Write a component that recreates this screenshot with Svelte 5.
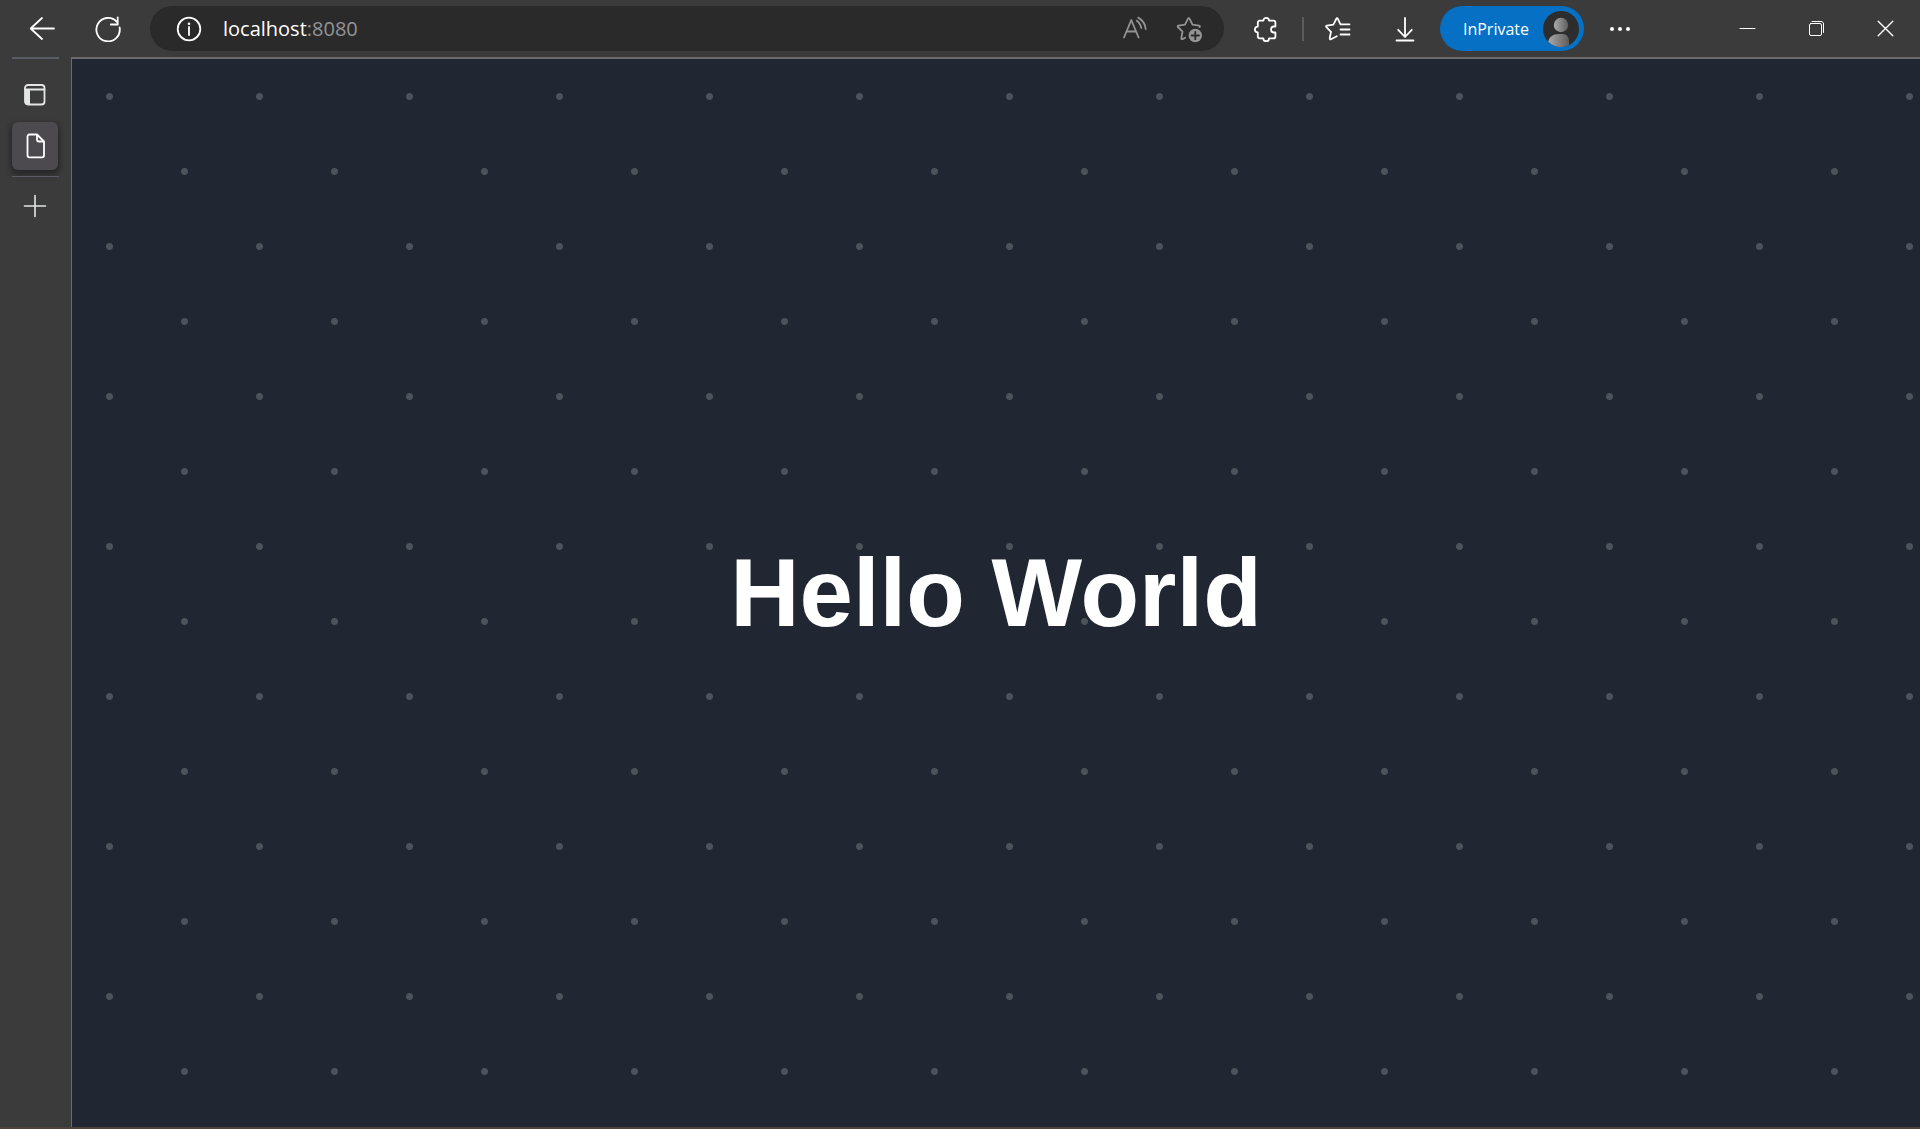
<script>
  const address = { host: 'localhost', port: ':8080' };
</script>

<div class="browser">
  <header class="toolbar">
    <button class="tool nav" aria-label="Back">
      <svg width="26" height="26" viewBox="0 0 26 26"><path d="M25 12.5H2M13 2 1.7 12.5 13 23" /></svg>
    </button>
    <button class="tool nav" aria-label="Refresh">
      <svg width="26" height="26" viewBox="0 0 26 26"><path d="M24.6 11.5A11.7 11.7 0 1 1 21.8 5.8M22.7 1.5V8.5H15.8" /></svg>
    </button>

    <form class="address" onsubmit={(e) => e.preventDefault()}>
      <button type="button" class="site" aria-label="View site information">
        <svg width="26" height="26" viewBox="0 0 26 26"><circle cx="13" cy="13" r="11.3" /><path d="M13 11v8" /><circle class="solid" cx="13" cy="7.7" r="1.3" /></svg>
      </button>
      <a class="url" href="#top">{address.host}<span>{address.port}</span></a>
      <button type="button" class="dim" aria-label="Read aloud">
        <svg width="26" height="26" viewBox="0 0 26 26"><path d="M2 21.5 9.3 4 16.6 21.5M4.8 15.5H14M14.8 4.8C17.2 6.5 18.8 9 19.2 12M16.2 1.6C20.5 4 23.2 8 23.7 13" /></svg>
      </button>
      <button type="button" class="dim" aria-label="Add this page to favorites">
        <svg width="28" height="28" viewBox="0 0 28 28"><path d="M9.2 22.8 6.5 24.1C5.8 24.4 5.2 24 5.3 23.3L6.5 16.6 1.9 12C1.4 11.5 1.7 10.7 2.4 10.6L9 9.6 12 3.6C12.4 3 13.2 3 13.5 3.6L16.5 9.6 23.1 10.6C24 10.8 24.2 11.6 23.6 12.1" /><circle class="solid" cx="19.3" cy="20.5" r="6.7" /><path class="cut" d="M19.3 16.8v7.4M15.6 20.5H23" /></svg>
      </button>
    </form>

    <button class="tool extension" aria-label="Extensions">
      <svg width="26" height="26" viewBox="0 0 26 26"><path d="M10.4 4.6A2.8 2.8 0 0 1 16 4.6H20.4C21.6 4.6 22.4 5.4 22.4 6.6V10.5H21A3 3 0 0 0 21 16.5H22.4V20.4C22.4 21.6 21.6 22.4 20.4 22.4H16A2.8 2.8 0 0 1 10.4 22.4H6.8C5.6 22.4 4.8 21.6 4.8 20.4V16.4A2.9 2.9 0 0 1 4.8 10.6V6.6C4.8 5.4 5.6 4.6 6.8 4.6Z" /></svg>
    </button>
    <span class="rule"></span>
    <button class="tool" aria-label="Favorites">
      <svg width="28" height="28" viewBox="0 0 28 28"><path d="M12.8 21.3 7 24.2C6.2 24.6 5.5 24.1 5.7 23.3L7 16.8 2.4 12.1C1.8 11.5 2.1 10.7 2.9 10.6L9.4 9.7 12.3 3.8C12.7 3 13.5 3 13.9 3.8L16.5 9.3H25.5M16.5 14.5H25.5M16.5 19.5H25.5" /></svg>
    </button>
    <button class="tool download" aria-label="Downloads">
      <svg width="26" height="26" viewBox="0 0 26 26"><path d="M13 2V20.5M6.2 13.8 13 21 19.8 13.8M4.5 24.5H21.5" /></svg>
    </button>
    <button class="profile">
      InPrivate
      <svg width="36" height="36" viewBox="0 0 36 36">
        <defs>
          <linearGradient id="silver"><stop offset="0" stop-color="#aaa" /><stop offset="1" stop-color="#5d5d5d" /></linearGradient>
          <clipPath id="disc"><circle cx="18" cy="18" r="18" /></clipPath>
        </defs>
        <g clip-path="url(#disc)"><rect width="36" height="36" fill="#2d2d2e" /><circle cx="18" cy="14" r="7.2" fill="url(#silver)" /><path d="M5 36V33C5 26 10 23 16 23H20C24 23 26 26 26 31V36Z" fill="url(#silver)" /></g>
      </svg>
    </button>
    <button class="tool more" aria-label="Settings and more">
      <svg width="24" height="24" viewBox="0 0 24 24"><g class="solid"><circle cx="4" cy="12" r="2" /><circle cx="12" cy="12" r="2" /><circle cx="20" cy="12" r="2" /></g></svg>
    </button>

    <div class="window">
      <button class="tool" aria-label="Minimize"><svg class="thin" width="17" height="17" viewBox="0 0 17 17"><path d="M1 8.5H16" /></svg></button>
      <button class="tool" aria-label="Restore"><svg class="thin" width="17" height="17" viewBox="0 0 17 17"><rect x="1.5" y="3.5" width="12" height="12" rx="1.5" /><path d="M4 1.5H13C14.5 1.5 15.5 2.5 15.5 4V12.5" /></svg></button>
      <button class="tool" aria-label="Close"><svg class="cross" width="17" height="17" viewBox="0 0 17 17"><path d="M1.2 1.2 15.8 15.8M15.8 1.2 1.2 15.8" /></svg></button>
    </div>
  </header>

  <div class="body">
    <nav class="tabs" aria-label="Tabs">
      <hr />
      <button class="panel" aria-label="Tab actions">
        <svg width="24" height="24" viewBox="0 0 24 24"><path class="solid" d="M2 6.5H7V22H4.5C3 22 2 21 2 19.5Z" /><rect x="2" y="2" width="19.5" height="19.5" rx="3" /><path d="M2 6.5H21.5" /></svg>
      </button>
      <button class="page" aria-label="localhost:8080" aria-current="page">
        <svg width="26" height="26" viewBox="0 0 26 26"><path d="M15 1.5H7.5C6.2 1.5 5.5 2.3 5.5 3.5V22.3C5.5 23.5 6.2 24.3 7.5 24.3H20.1C21.3 24.3 22 23.5 22 22.3V8.5L15 1.5V6.5C15 7.8 15.7 8.5 17 8.5H22" /></svg>
      </button>
      <hr />
      <button class="add" aria-label="New tab">
        <svg width="24" height="24" viewBox="0 0 24 24"><path d="M12 1.5V22.5M1.5 12H22.5" /></svg>
      </button>
    </nav>
    <main id="top"><h1>Hello World</h1></main>
  </div>
</div>

<style>
  :global(body) {
    margin: 0;
    background: #3b3b3b;
  }
  .browser {
    display: flex;
    flex-direction: column;
    min-height: 100vh;
    box-sizing: border-box;
    border-bottom: 2px solid #50413c;
    background: #3b3b3b;
    color: #fff;
    font-family: 'Open Sans', 'Noto Sans', sans-serif;
  }
  .toolbar {
    display: flex;
    align-items: center;
    height: 57px;
    padding-left: 9px;
  }
  button {
    display: flex;
    align-items: center;
    justify-content: center;
    padding: 0;
    border: 0;
    background: none;
    color: inherit;
    font: inherit;
    cursor: pointer;
  }
  svg {
    display: block;
    flex: none;
    fill: none;
    stroke: currentColor;
    stroke-width: 1.8;
    stroke-linecap: round;
    stroke-linejoin: round;
  }
  .thin {
    stroke-width: 1;
  }
  .cross {
    stroke-width: 1.4;
  }
  .solid {
    fill: currentColor;
    stroke: none;
  }
  .tool {
    flex: none;
    width: 69px;
    height: 57px;
  }
  .nav {
    width: 66px;
  }
  .address {
    display: flex;
    flex: 1;
    align-items: center;
    gap: 28px;
    height: 45px;
    min-width: 0;
    margin: 0 7px 0 9px;
    padding: 0 20px 0 26px;
    box-sizing: border-box;
    border-radius: 23px;
    background: #2a2a2a;
  }
  .url {
    flex: 1;
    margin-left: -7px;
    color: #fff;
    font-size: 20px;
    line-height: 28px;
    text-decoration: none;
  }
  .url span {
    color: #949494;
  }
  .dim {
    color: #949494;
  }
  .cut {
    stroke: #2a2a2a;
  }
  .extension {
    width: 71px;
  }
  .rule {
    width: 2px;
    height: 24px;
    background: #5b5c60;
  }
  .download {
    width: 64px;
  }
  .profile {
    gap: 14px;
    height: 45px;
    margin-left: 3px;
    padding: 0 5px 0 23px;
    border-radius: 23px;
    background: #0570c4;
    font-size: 16px;
  }
  .profile svg {
    stroke: none;
  }
  .more {
    width: 72px;
  }
  .window {
    display: flex;
    margin-left: 57px;
  }
  .body {
    display: flex;
    flex: 1;
  }
  .tabs {
    display: flex;
    flex: none;
    flex-direction: column;
    align-items: flex-start;
    width: 59px;
    padding-left: 12px;
  }
  hr {
    width: 47px;
    height: 1px;
    margin: 0;
    border: 0;
    background: #5b5d66;
  }
  hr:first-child {
    height: 2px;
  }
  .tabs button {
    width: 46px;
  }
  .tabs .panel {
    height: 48px;
    margin: 12px 0 3px;
  }
  .tabs .page {
    height: 48px;
    margin-bottom: 6px;
    border-radius: 6px;
    background: #4c4a4e;
    box-shadow: 0 3px 5px 2px #292929;
  }
  .tabs .add {
    height: 58px;
  }
  .add,
  .panel {
    color: #e4e6e6;
  }
  .add svg {
    stroke-width: 1.6;
  }
  main {
    display: flex;
    flex: 1;
    align-items: center;
    justify-content: center;
    border-top: 2px solid #6c6a6b;
    border-left: 1px solid #6c6a6b;
    background-color: #202632;
    background-image:
      radial-gradient(circle at 25% 25%, #4d525b 3px, transparent 4px),
      radial-gradient(circle at 75% 75%, #4d525b 3px, transparent 4px);
    background-size: 150px 150px;
  }
  h1 {
    margin: 0;
    font: bold 96px/1 'Liberation Sans', Arial, sans-serif;
  }
</style>
